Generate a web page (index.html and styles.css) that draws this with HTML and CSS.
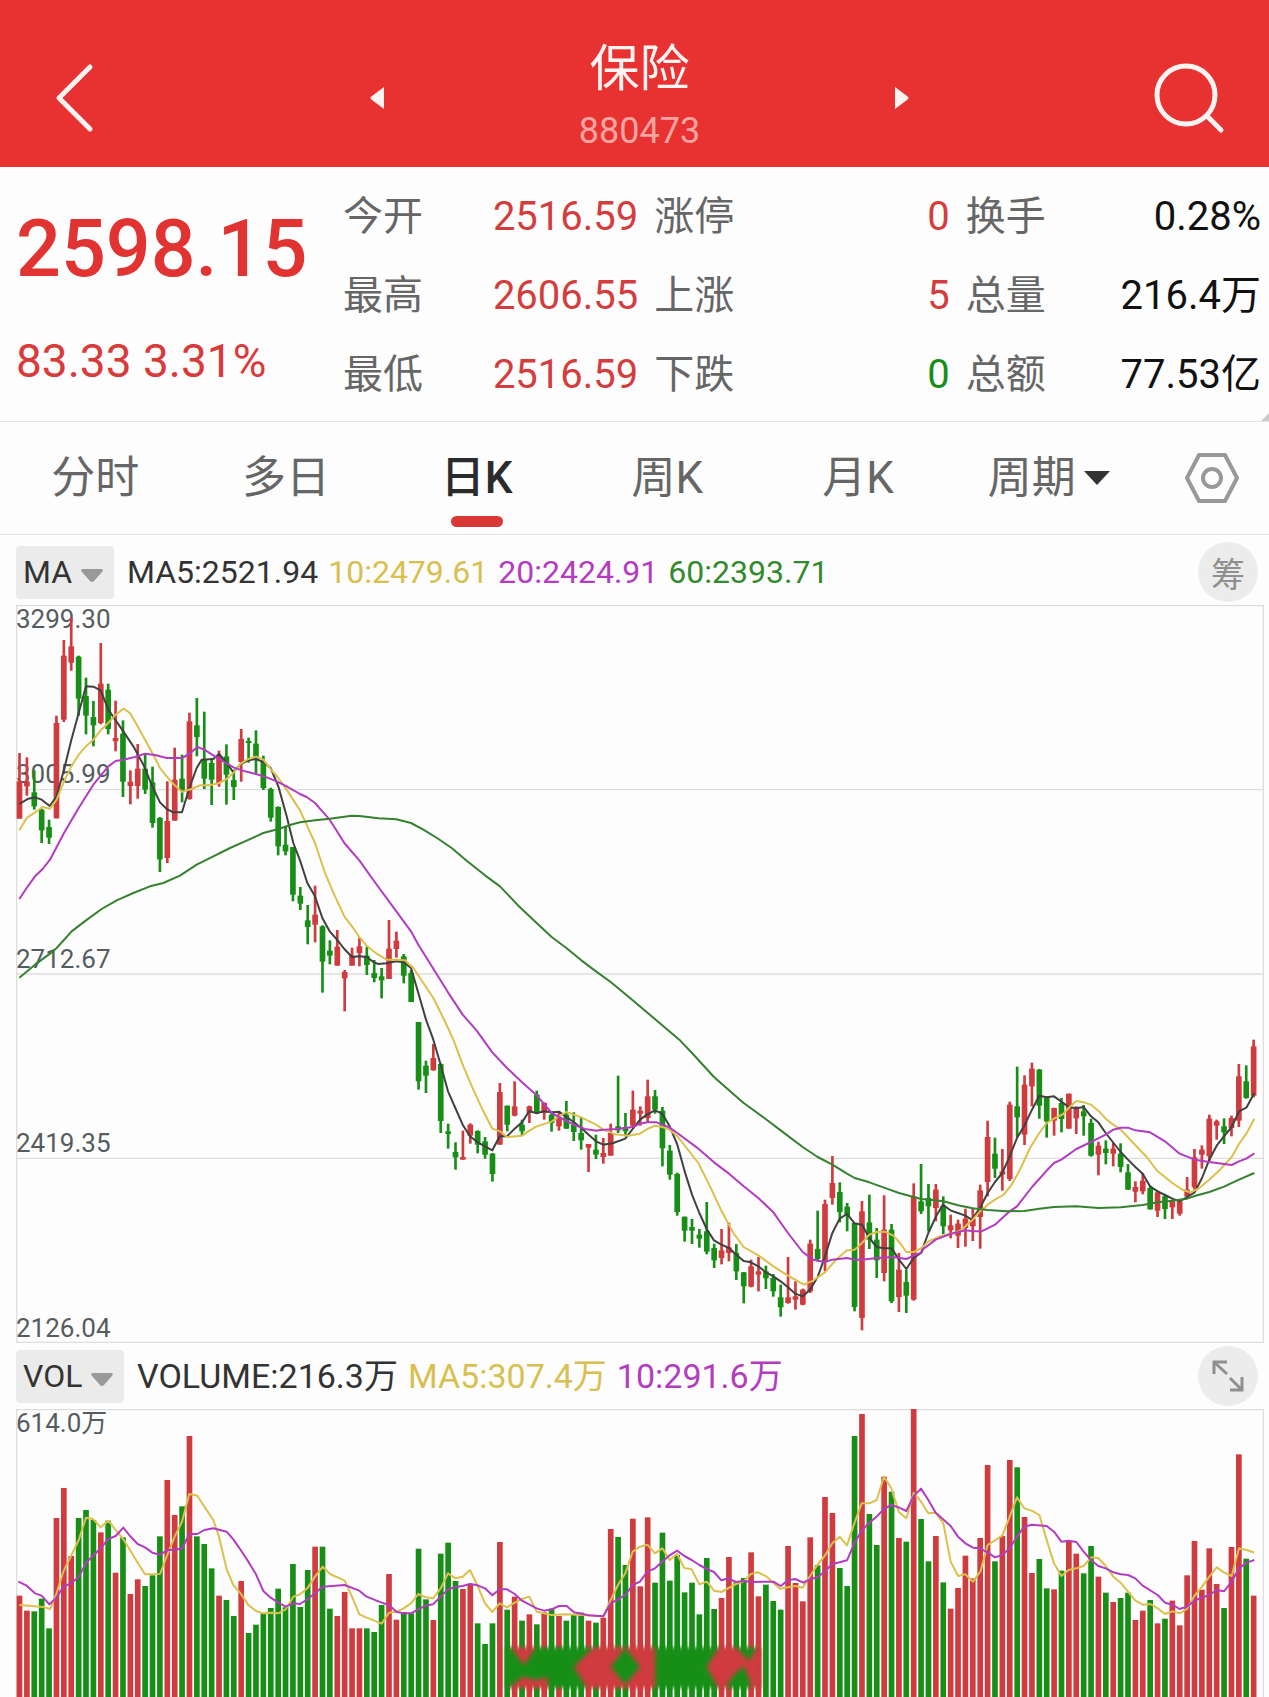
FILE: index.html
```html
<!DOCTYPE html>
<html lang="zh-CN">
<head>
<meta charset="utf-8">
<meta name="viewport" content="width=device-width, initial-scale=1">
<title>保险 880473</title>
<link rel="stylesheet" href="styles.css">
</head>
<body>
<header class="topbar">
  <button class="icon-button back" type="button" aria-label="返回">
    <svg width="40" height="70" viewBox="0 0 40 70" fill="none" stroke="currentColor" stroke-width="5" stroke-linecap="round" stroke-linejoin="round"><path d="M36 4 5 35l31 31"/></svg>
  </button>
  <nav class="switcher">
    <button class="icon-button" type="button" aria-label="上一个"><svg width="14" height="22" viewBox="0 0 14 22" fill="currentColor"><path d="M14 0v22L2 13q-3-2 0-4z"/></svg></button>
    <div class="heading">
      <h1 class="name">保险</h1>
      <p class="code">880473</p>
    </div>
    <button class="icon-button" type="button" aria-label="下一个"><svg width="14" height="22" viewBox="0 0 14 22" fill="currentColor"><path d="M0 0v22l12-9q3-2 0-4z"/></svg></button>
  </nav>
  <button class="icon-button search" type="button" aria-label="搜索">
    <svg width="72" height="72" viewBox="0 0 72 72" fill="none" stroke="currentColor" stroke-width="5" stroke-linecap="round"><circle cx="33" cy="33" r="29"/><path d="m54 54 14 14"/></svg>
  </button>
</header>

<main>
  <section class="quote">
    <div class="latest">
      <p class="price">2598.15</p>
      <p class="change">83.33 3.31%</p>
    </div>
    <dl class="stats">
      <div class="stat"><dt>今开</dt><dd class="up">2516.59</dd></div>
      <div class="stat"><dt>涨停</dt><dd class="up">0</dd></div>
      <div class="stat"><dt>换手</dt><dd>0.28%</dd></div>
      <div class="stat"><dt>最高</dt><dd class="up">2606.55</dd></div>
      <div class="stat"><dt>上涨</dt><dd class="up">5</dd></div>
      <div class="stat"><dt>总量</dt><dd>216.4万</dd></div>
      <div class="stat"><dt>最低</dt><dd class="up">2516.59</dd></div>
      <div class="stat"><dt>下跌</dt><dd class="down">0</dd></div>
      <div class="stat"><dt>总额</dt><dd>77.53亿</dd></div>
    </dl>
  </section>

  <nav class="tabs">
    <button class="tab" type="button">分时</button>
    <button class="tab" type="button">多日</button>
    <button class="tab active" type="button" aria-current="true">日K</button>
    <button class="tab" type="button">周K</button>
    <button class="tab" type="button">月K</button>
    <button class="tab" type="button" aria-haspopup="menu">周期<svg class="caret" width="26" height="14" viewBox="0 0 26 14" fill="#333"><path d="M0 0h26L13 14z"/></svg></button>
    <button class="icon-button settings" type="button" aria-label="设置">
      <svg width="56" height="52" viewBox="0 0 56 52" fill="none" stroke="#999" stroke-width="4" stroke-linejoin="round"><path d="M15 3h26l12 23-12 23H15L3 26z"/><circle cx="28" cy="26" r="9"/></svg>
    </button>
  </nav>

  <section class="panel">
    <div class="indicator main-indicator">
      <div class="picker">
        <select class="picker-select" aria-label="主图指标"><option>MA</option></select>
        <svg class="picker-caret" width="22" height="13" viewBox="0 0 22 13" fill="#999"><path d="M2 0h18q3 0 1 3l-8 9q-2 2-4 0L1 3q-2-3 1-3z"/></svg>
      </div>
      <p class="legend"><span>MA5:2521.94</span><span class="ma10">10:2479.61</span><span class="ma20">20:2424.91</span><span class="ma60">60:2393.71</span></p>
      <button class="round" type="button">筹</button>
    </div>
    <svg class="chart" id="price-chart" viewBox="48 16 3744 2214" role="img" aria-label="日K线图"></svg>
  </section>

  <section class="panel">
    <div class="indicator">
      <div class="picker">
        <select class="picker-select" aria-label="副图指标"><option>VOL</option></select>
        <svg class="picker-caret" width="22" height="13" viewBox="0 0 22 13" fill="#999"><path d="M2 0h18q3 0 1 3l-8 9q-2 2-4 0L1 3q-2-3 1-3z"/></svg>
      </div>
      <p class="legend volume-legend"><span>VOLUME:216.3万</span><span class="ma10">MA5:307.4万</span><span class="ma20">10:291.6万</span></p>
      <button class="round" type="button" aria-label="展开">
        <svg width="32" height="32" viewBox="0 0 32 32" fill="none" stroke="currentColor" stroke-width="3"><path d="M2 14V2h13M2 2l13 12M30 17v13H18M30 30 18 18"/></svg>
      </button>
    </div>
    <svg class="chart" id="volume-chart" viewBox="48 237 3744 864" role="img" aria-label="成交量图"></svg>
  </section>
</main>
<script src="chart.js"></script>
</body>
</html>
```
FILE: styles.css
```css
* {
  box-sizing: border-box;
}

body {
  margin: 0;
  background: #fdfdfd;
  color: #333;
  font-family: Roboto, "Noto Sans CJK SC", sans-serif;
}

h1, p, dl, dd {
  margin: 0;
}

button, select {
  margin: 0;
  padding: 0;
  border: 0;
  background: none;
  color: inherit;
  font: inherit;
}

svg {
  display: block;
}

/* Title bar */
.topbar {
  display: grid;
  grid-template-columns: 1fr 46% 1fr;
  align-items: center;
  padding: 39px 44px 10px 54px;
  background: #e83131;
  color: #fff4f2;
}

.back {
  justify-self: start;
}

.search {
  justify-self: end;
}

.switcher {
  display: flex;
  align-items: center;
  justify-content: space-between;
}

.heading {
  display: flex;
  flex-direction: column;
  gap: 6px;
  text-align: center;
}

.name {
  font-size: 50px;
  font-weight: 400;
  line-height: 60px;
}

.code {
  color: #f8a5a2;
  font-size: 36px;
  line-height: 52px;
}

/* Quote */
.quote {
  position: relative;
  display: flex;
  padding: 10px 8px 7px 16px;
  border-bottom: 1px solid #e2e2e2;
}

.quote::after {
  content: "";
  position: absolute;
  right: 0;
  bottom: 0;
  border-left: 8px solid transparent;
  border-bottom: 8px solid #ccc;
}

.latest {
  display: flex;
  flex: 0 0 327px;
  flex-direction: column;
  gap: 40px;
  padding-top: 24px;
  color: #d93a3a;
}

.price {
  color: #e23333;
  font-size: 79px;
  font-weight: 500;
  line-height: 96px;
}

.change {
  font-size: 46px;
  line-height: 48px;
}

.stats {
  display: grid;
  flex: 1;
  grid-template-columns: repeat(3, 1fr);
  column-gap: 16px;
}

.stat {
  display: flex;
  justify-content: space-between;
  font-size: 40px;
  line-height: 79px;
}

.stat dt {
  color: #666;
}

.stat dd {
  color: #111;
}

.stat .up {
  color: #d43d3d;
}

.stat .down {
  color: #178f17;
}

/* Period tabs */
.tabs {
  display: flex;
  border-bottom: 1px solid #e6e6e6;
}

.tab {
  position: relative;
  display: flex;
  flex: 1;
  align-items: center;
  justify-content: center;
  gap: 8px;
  color: #666;
  font-size: 44px;
  line-height: 112px;
}

.tab.active {
  color: #2b2b2b;
  font-weight: 500;
}

.tab.active::after {
  content: "";
  position: absolute;
  bottom: 7px;
  width: 52px;
  height: 11px;
  border-radius: 6px;
  background: #d93636;
}

.settings {
  display: flex;
  flex: 0 0 125px;
  align-items: center;
  justify-content: center;
  padding-left: 10px;
}

/* Indicator rows */
.panel {
  padding: 0 5px 0 16px;
}

.indicator {
  display: flex;
  align-items: center;
  height: 66px;
  padding-right: 6px;
}

.main-indicator {
  height: 70px;
  padding-top: 4px;
}

.picker {
  position: relative;
  margin-right: 13px;
}

.picker-select {
  display: block;
  height: 53px;
  padding: 0 41px 0 7px;
  border-radius: 4px;
  background: #ebebeb;
  font-size: 32px;
  appearance: none;
}

.picker-caret {
  position: absolute;
  top: 23px;
  right: 11px;
  pointer-events: none;
}

.legend {
  display: flex;
  flex: 1;
  gap: 10px;
  font-size: 32px;
  line-height: 52px;
}

.volume-legend {
  font-size: 34px;
}

.ma10 {
  color: #d8c050;
}

.ma20 {
  color: #b43cc0;
}

.ma60 {
  color: #338a2d;
}

.round {
  display: flex;
  flex: 0 0 60px;
  align-items: center;
  justify-content: center;
  height: 60px;
  border-radius: 50%;
  background: #ececec;
  color: #8f8f8f;
  font-size: 34px;
}

/* Charts: three drawing units per pixel */
.chart {
  width: 100%;
  height: auto;
  overflow: visible;
}

.grid {
  fill: none;
  stroke: #dedede;
  stroke-width: 4;
}

.axis {
  fill: #555c60;
  font-size: 78px;
}

.rise {
  fill: #cf3b3e;
}

.fall {
  fill: #178f17;
}

.line {
  fill: none;
  stroke-width: 6;
  stroke-linejoin: round;
}

.line-5 {
  stroke: #404040;
}

.line-10 {
  stroke: #dcc04c;
}

.line-20 {
  stroke: #b23cc0;
}

.line-60 {
  stroke: #35812f;
}

.smudge {
  filter: blur(6px);
}
```
FILE: chart.js
```js
// One entry per day: direction, high, body top, body bottom, low.
const days = `r 460 545 657 657|r 473 545 560 588|g 512 578 620 630|g 627 630 692 730|g 660 682 714 733|r 348 370 656 656|r 121 168 360 367|r 55 140 189 213|g 168 171 297 348|g 234 289 348 404|g 304 352 377 440|r 130 252 370 374|g 252 270 388 404|r 303 415 425 455|g 362 402 546 592|r 512 546 559 614|r 433 507 559 597|g 462 507 570 583|g 501 548 670 684|g 652 655 779 817|r 545 664 775 790|r 444 540 663 663|g 465 537 573 608|r 339 365 598 600|g 295 377 412 470|g 336 480 537 568|g 475 490 540 616|r 453 470 550 561|g 434 470 525 615|g 510 541 562 601|r 388 418 487 546|g 414 424 430 489|g 392 432 480 521|g 468 486 565 571|g 564 568 654 666|g 620 622 740 767|g 680 735 755 767|g 742 742 885 905|g 862 888 912 931|g 916 962 982 1034|r 858 945 975 1028|g 977 980 1086 1179|g 1022 1053 1068 1094|r 991 1041 1098 1098|r 1111 1117 1136 1235|r 1044 1068 1098 1098|r 1014 1040 1060 1100|g 1041 1068 1096 1126|g 1081 1120 1135 1148|g 1105 1130 1142 1196|r 961 1047 1138 1138|r 996 1023 1048 1074|g 1063 1070 1128 1151|g 1110 1120 1207 1207|g 1267 1267 1445 1470|g 1383 1398 1428 1480|r 1333 1375 1412 1413|g 1391 1393 1564 1600|g 1572 1595 1603 1647|g 1628 1657 1673 1710|r 1593 1672 1680 1680|r 1571 1575 1608 1632|g 1592 1594 1635 1661|g 1612 1625 1665 1677|g 1660 1662 1723 1746|r 1450 1477 1635 1635|g 1518 1518 1575 1595|r 1445 1520 1548 1550|g 1560 1575 1595 1607|r 1518 1520 1540 1570|g 1473 1485 1540 1540|r 1508 1510 1540 1560|g 1540 1545 1570 1596|r 1540 1555 1580 1593|g 1504 1545 1587 1587|g 1538 1575 1597 1624|g 1555 1600 1622 1650|r 1633 1633 1644 1717|g 1605 1650 1665 1678|r 1615 1660 1672 1692|r 1572 1600 1668 1668|g 1428 1580 1592 1600|g 1540 1582 1595 1610|r 1473 1530 1578 1582|r 1520 1533 1542 1578|r 1440 1490 1555 1568|g 1471 1490 1530 1542|g 1522 1533 1646 1700|g 1636 1653 1725 1740|g 1719 1723 1837 1848|g 1851 1851 1893 1926|g 1858 1882 1893 1933|g 1888 1905 1917 1944|g 1807 1895 1956 1964|g 1932 1945 1982 2005|r 1888 1952 1975 1994|r 1869 1943 1960 1985|g 1933 1960 2015 2041|g 2017 2018 2060 2111|r 1980 2000 2061 2063|r 1972 2015 2025 2075|g 1998 2015 2036 2068|g 2023 2035 2075 2091|g 2055 2093 2123 2151|r 1972 2093 2110 2112|r 2045 2090 2100 2130|r 2067 2070 2115 2117|r 1920 1932 2075 2080|g 1833 1948 1978 1985|r 1800 1813 1987 2015|r 1669 1750 1795 1815|g 1748 1777 1837 1868|g 1810 1821 1848 1895|g 1870 1870 2122 2135|r 1804 1835 2155 2192|g 1785 1868 1920 1948|g 1885 1920 1982 2035|r 1787 1890 2020 2045|g 1873 1890 2105 2110|r 1960 2010 2092 2137|g 2010 2047 2088 2140|r 1751 1790 2100 2103|g 1693 1805 1835 1843|g 1753 1795 1820 1895|r 1753 1770 1825 1865|g 1790 1818 1880 1903|r 1845 1877 1892 1916|r 1860 1872 1908 1945|r 1827 1857 1885 1941|r 1827 1857 1880 1924|r 1755 1772 1852 1947|r 1563 1612 1747 1790|g 1614 1662 1707 1735|r 1648 1715 1725 1773|r 1506 1515 1738 1744|g 1401 1520 1553 1612|r 1427 1455 1605 1636|r 1389 1407 1460 1520|g 1408 1410 1518 1557|g 1490 1495 1565 1614|r 1524 1525 1563 1608|g 1495 1510 1558 1598|r 1482 1482 1587 1587|r 1520 1525 1556 1603|g 1516 1535 1550 1608|g 1557 1570 1668 1671|r 1626 1638 1665 1727|g 1622 1647 1660 1694|r 1630 1647 1662 1700|g 1631 1662 1702 1718|g 1693 1718 1770 1771|r 1745 1762 1776 1808|r 1720 1743 1775 1784|g 1758 1765 1829 1830|r 1773 1778 1833 1852|g 1784 1790 1828 1858|r 1800 1805 1823 1858|r 1805 1805 1842 1848|r 1732 1770 1790 1797|r 1648 1673 1763 1770|r 1637 1650 1665 1707|r 1545 1557 1670 1685|r 1560 1565 1578 1620|g 1556 1580 1598 1633|r 1548 1555 1585 1610|r 1393 1430 1563 1582|g 1397 1445 1495 1497|r 1320 1340 1488 1493`.split("|").map(row => row.split(" "));

// Top edge of each day's volume bar.
const volumes = [797,842,844,806,895,564,474,678,564,540,570,607,572,728,622,792,748,768,736,619,450,555,529,318,619,642,715,797,810,858,753,909,884,850,834,776,832,702,831,720,650,650,836,858,786,895,895,895,906,825,732,869,846,850,656,808,870,671,638,753,777,762,880,942,880,636,839,800,872,853,883,847,836,858,872,852,848,872,878,863,597,621,705,566,769,562,758,608,752,675,787,758,853,684,837,804,681,757,744,667,799,764,813,839,648,759,814,622,706,501,549,714,768,318,252,552,645,440,485,624,635,237,567,694,618,757,836,774,677,745,624,405,694,618,390,412,561,729,687,775,778,722,634,671,730,648,740,788,816,804,788,870,842,810,880,866,812,886,736,633,779,655,762,834,651,373,686,797];

// Average lines, in sections: [x offset, y offset, points].
const priceLines = {
  60: [[0,0,"58,1134 105,1095 150,1062 170,1045 215,995 258,962 305,928 350,902 400,880 450,860 490,850 540,828 590,795 640,770 690,745 735,725 790,700 835,688 880,673"],
    [900,540,"0,128 45,122 89,117 155,108 178,109 235,116 289,119 333,130 370,150 411,175 455,205 500,243 555,287 600,320 655,378 710,430 755,472 799,505 844,542 888,575 932,607 990,655"],
    [1800,1320,"238,0 276,40 342,112 387,152 431,190 497,238 542,272 608,322 653,352 697,375 741,402 764,415 808,428 852,444 897,460 941,472 963,478"],
    [2760,1260,"30,540 70,545 114,557 158,566 203,571 260,575 313,574 358,567 402,562 469,560 535,565 602,563 668,556 713,548 757,543 801,537 824,529 868,517 912,501 957,480 1003,460"]],
  5: [[0,0,"58,613 85,597 105,593 125,600 149,619 170,590 192,510 213,425 236,340 258,260 280,261 302,272 325,330 347,362 370,395 400,440 430,495 457,560 480,608 500,628 520,638 546,638 568,565 590,505 605,480 640,478 657,463 680,490 700,518 722,493 745,482 768,478 790,487 812,505 835,560 860,650 880,730"],
    [900,540,"0,242 22,310 45,350 67,415 89,455 111,480 133,508 156,532 178,530 200,532 222,548 235,553 260,551 289,545 311,548 333,565 355,640 378,720 400,780 422,855 444,935 466,985 488,1035 510,1070 533,1088 555,1100 577,1112 599,1070 621,1070 644,1047 666,1028 688,994 710,1001 732,995 755,998 777,996 799,1012 821,1027 844,1045 866,1065 888,1085 910,1095"],
    [1800,1320,"40,310 76,297 98,268 120,240 142,224 165,212 187,222 209,260 232,315 254,395 276,465 298,520 320,568 342,602 364,615 387,625 409,645 431,664 453,668 475,680 497,697 520,710 542,725 564,743 586,762 608,770 630,750 653,712 675,650 697,580 719,537 741,523 764,551 786,555 808,595 830,622 852,626 875,626 897,660 919,688 941,655 963,640 985,580 1008,530"],
    [2760,1260,"69,555 91,572 114,580 136,588 155,600 180,565 203,520 225,487 247,460 269,410 291,355 313,318 336,270 358,228 380,233 402,230 424,246 446,262 469,266 491,262 513,290 535,308 557,340 602,397 624,420 646,442 668,462 690,500 713,515 735,526 757,537 779,545 801,532 824,518 846,475 868,420 890,378 912,350 935,322 957,275 979,264 1003,220"]],
  10: [[0,0,"58,692 80,655 105,638 128,622 150,627 170,600 192,545 215,498 236,465 258,440 280,420 302,392 325,370 347,345 370,327 390,340 413,380 435,420 457,460 480,505 500,530 520,553 546,576 575,568 600,557 630,557 657,550 680,538 700,520 722,492 745,478 768,471 790,480 812,508 835,535 860,570"],
    [900,540,"0,92 45,190 75,280 105,350 133,410 156,440 178,472 200,498 230,522 260,540 289,540 315,542 340,565 370,610 400,655 430,715 460,780 490,860 520,930 550,995 577,1047 600,1055 621,1072 666,1068 688,1053 710,1040 755,1026 777,1010 799,997 844,1013 888,1035 910,1050 932,1058"],
    [1800,1320,"45,284 85,288 120,282 142,268 165,258 187,262 209,270 232,290 260,325 295,370 330,440 365,515 400,580 431,622 475,647 520,680 564,708 612,735 640,722 675,698 710,658 741,632 764,630 786,610 808,585 830,577 855,576 880,588 900,610 919,637 941,637 965,625 985,605"],
    [2760,1260,"60,650 90,643 120,633 136,620 158,600 180,575 203,555 225,540 250,526 275,495 300,450 330,385 358,340 380,310 402,297 430,283 446,265 469,244 491,248 513,255 535,273 557,297 580,315 602,330 640,370 680,412 713,455 757,490 790,512 812,518 835,507 868,480 900,450 935,412 957,373 979,342 1003,297"]],
  20: [[0,0,"58,898 80,865 105,830 128,808 150,780 192,700 236,625 280,555 325,500 347,484 370,480 405,472 435,462 465,466 500,475 546,475 568,463 592,442 613,450 640,467 665,482 700,503 735,515 768,523 800,533 830,545 860,560"],
    [900,540,"0,43 20,52 45,70 67,95 89,120 111,155 133,190 178,242 222,304 289,395 333,455 355,495 400,567 444,638 488,705 530,753 577,818 621,865 666,908 710,947 755,1000 777,1012 821,1035 855,1048 890,1053"],
    [1800,1320,"0,271 50,268 98,262 120,252 142,248 170,248 187,255 209,264 232,280 290,323 342,368 387,402 431,440 475,475 520,518 564,580 608,637 640,660 675,667 697,660 741,655 764,660 786,660 830,655 880,652 919,658 941,648 965,638"],
    [2760,1260,"10,688 47,660 91,643 136,632 160,635 185,635 225,615 269,575 291,560 336,502 380,453 402,430 424,420 469,388 513,367 557,345 580,330 602,324 624,324 646,332 690,338 735,365 779,402 824,420 868,427 912,433 935,436 957,425 979,417 1003,401"]]
};

const volumeLines = {
  10: [[0,0,"58,825 130,831 150,837 168,795 190,725 213,678 236,630 258,563 280,568 302,592 325,572 347,600 370,628 390,660 413,698 435,733 480,732 500,680 524,620 546,575 568,492 592,497 613,530 640,570 657,620 680,718 700,765 722,790 745,825 768,843 790,850 812,848 835,850 857,838 880,800 900,793 922,775 945,740 968,710 990,732 1034,752 1056,800 1078,853 1100,863 1145,881 1167,848 1190,845 1211,835 1233,820 1255,792 1275,801"],
    [1260,210,"39,595 62,565 84,520 106,535 128,530 150,510 173,558 195,610 217,636 239,610 261,622 284,608 306,597 328,590 350,635 372,640 395,645 440,643 484,645 550,649 572,600 594,555 616,520 638,455 660,440 682,434 705,460 727,445 749,480 771,462 793,504 815,508 838,553 860,545 882,572 904,576 926,564 948,552 970,545 993,522 1015,517 1040,530 1080,566 1125,558 1148,563 1170,528 1192,495 1214,468 1237,430 1259,410 1281,436"],
    [2520,0,"43,580 65,520 88,520 110,510 132,440 154,475 176,545 199,565 221,488 243,515 265,550 287,548 310,580 332,695 354,738 376,733 399,755 421,725 443,645 487,617 509,560 531,502 553,535 575,542 598,555 620,630 642,700 664,738 686,720 709,715 731,708 753,682 775,684 797,708 820,740 842,758 864,785 886,812 908,824 931,822 953,835 975,852 997,844 1019,850 1041,837 1063,798 1086,770 1108,740 1130,712 1152,727 1175,738 1197,655 1220,660 1243,668"]],
  20: [[0,0,"55,755 80,767 105,790 125,797 148,823 168,805 190,770 213,760 236,742 258,698 302,655 325,627 347,618 370,593 390,618 413,642 435,652 457,668 480,674 502,661 546,656 568,612 592,612 613,600 640,595 680,605 700,628 722,660 745,695 768,733 790,783 812,803 835,818 857,830 880,820 900,822 922,808 945,790 968,770 1034,765 1078,782 1100,800 1145,818 1167,825 1190,846 1211,850 1233,850 1255,838"],
    [1260,210,"17,617 39,613 62,590 84,568 106,561 128,558 150,552 173,556 195,565 217,586 239,568 261,568 284,582 306,602 350,625 372,632 395,628 417,618 440,618 462,637 506,646 550,649 572,610 594,598 616,585 638,555 660,545 682,515 705,505 727,485 749,466 771,452 793,468 815,480 838,495 860,507 882,516 904,541 926,535 948,546 970,543 993,546 1060,545 1082,558 1104,541 1126,537 1150,548 1170,538 1192,532 1214,515 1237,492 1259,487 1281,481"],
    [2520,0,"43,640 65,602 88,578 110,560 132,537 154,525 176,532 199,543 221,498 243,476 265,510 287,548 332,588 354,620 376,640 399,653 421,655 443,668 465,682 487,675 509,655 531,620 553,590 575,584 620,588 642,605 664,635 686,632 709,636 731,665 753,690 775,708 797,715 820,727 842,733 864,735 886,745 908,767 953,795 975,818 997,824 1019,837 1041,830 1063,812 1108,795 1130,780 1152,784 1175,755 1197,715 1220,698 1243,690"]]
};

const centre = i => 58.5 + i * 22.17;
const tone = i => (days[i][0] === "r" ? "rise" : "fall");
const bar = (i, width, top, bottom) =>
  `<rect class="${tone(i)}" x="${(centre(i) - width / 2).toFixed(1)}" y="${top}" width="${width}" height="${bottom - top}"/>`;

const drawLines = lines => Object.entries(lines).map(([name, sections]) => {
  const points = sections.flatMap(([dx, dy, list]) => list.split(" ").map(pair => {
    const [x, y] = pair.split(",").map(Number);
    return `${x + dx},${y + dy}`;
  }));
  return `<polyline class="line line-${name}" points="${points.join(" ")}"/>`;
}).join("");

const label = (y, text) => `<text class="axis" x="48" y="${y}">${text}</text>`;

document.getElementById("price-chart").innerHTML =
  `<path class="grid" d="M50 18H3790V2228H50zM50 570H3790M50 1123H3790M50 1676H3790"/>` +
  label(85, "3299.30") + label(550, "3005.99") + label(1105, "2712.67") + label(1657, "2419.35") + label(2212, "2126.04") +
  days.map(([, high, top, bottom, low], i) => bar(i, 8, high, low) + bar(i, 17, top, bottom)).join("") +
  drawLines(priceLines);

document.getElementById("volume-chart").innerHTML =
  `<path class="grid" d="M50 1101V239H3790V1101"/>` +
  label(306, "614.0万") +
  volumes.map((top, i) => bar(i, 17, top, 1101)).join("") +
  drawLines(volumeLines) +
  `<g class="smudge">
    <path class="fall" d="M1518 952H2282V1074H1518z"/>
    <path class="rise" d="M1532 952h76l-36 54zM1526 1074l42-34 40 10 32-8 6 32zM1722 1010l58-58h186v122h-206zM2120 1010l36-58h52l40 40 22-40h12v122h-28l-22-64-34 30-20 34h-24z"/>
    <path class="fall" d="M1832 1010l44-56 44 56-44 54zM2190 1050l36-40 24 40-24 24z"/>
  </g>`;
```
